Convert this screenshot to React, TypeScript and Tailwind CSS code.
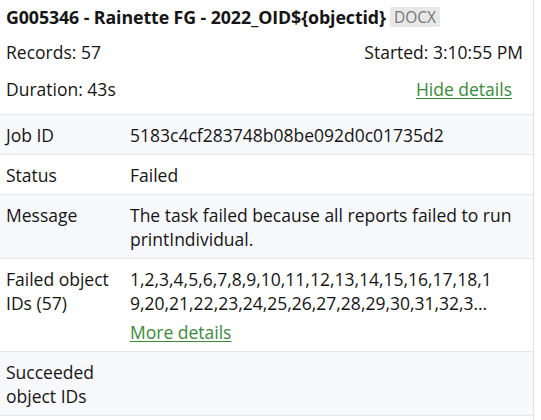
export default function App() {
  const rows: { label: string; value: React.ReactNode }[] = [
    { label: "Job ID", value: "5183c4cf283748b08be092d0c01735d2" },
    { label: "Status", value: "Failed" },
    {
      label: "Message",
      value: "The task failed because all reports failed to run printIndividual.",
    },
    {
      label: "Failed object IDs (57)",
      value: (
        <div className="flex w-[366px] flex-col">
          <span className="line-clamp-2 break-all">
            1,2,3,4,5,6,7,8,9,10,11,12,13,14,15,16,17,18,19,20,21,22,23,24,25,26,27,28,29,30,31,32,33,34,35,36,37,38,39,40,41,42,43,44,45,46,47,48,49,50,51,52,53,54,55,56,57
          </span>
          <a className="mt-[5px] w-fit text-[#3b8a3a] underline decoration-1 underline-offset-2">
            More details
          </a>
        </div>
      ),
    },
    { label: "Succeeded object IDs", value: "" },
  ];

  return (
    <div className="w-[534px] min-h-[420px] border-r border-[#e4e4e4] bg-white font-['Open_Sans',sans-serif] text-[17.5px] text-[#151515]">
      <div className="px-[6px] pt-[6px]">
        <div className="flex items-center gap-[4px]">
          <h2 className="font-bold text-[17.8px] leading-[22px] tracking-[-0.1px]">
            G005346 - Rainette FG - 2022_OID{"${objectid}"}
          </h2>
          <span className="rounded-[2px] bg-[#e8e8e8] px-[4px] text-[15.5px] leading-[20px] text-[#777777]">
            DOCX
          </span>
        </div>
        <div className="mt-[13px] flex justify-between pr-[4px] leading-[22px]">
          <span>Records: 57</span>
          <span>Started: 3:10:55 PM</span>
        </div>
        <div className="mt-[15px] flex justify-between pr-[15px] leading-[22px]">
          <span>Duration: 43s</span>
          <a className="text-[#3b8a3a] underline decoration-1 underline-offset-2">
            Hide details
          </a>
        </div>
      </div>
      <div className="mt-[14px] border-b border-[#e6e6e6]">
        {rows.map((r, i) => (
          <div
            key={r.label}
            className={`flex border-t border-[#e6e6e6] py-[7.5px] leading-[24px] ${i % 2 === 0 ? "bg-[#f8f9fc]" : "bg-white"}`}
          >
            <div className="w-[130px] shrink-0 pl-[6px] pr-[8px]">{r.label}</div>
            <div className="flex-1 pr-[20px]">{r.value}</div>
          </div>
        ))}
      </div>
    </div>
  );
}
